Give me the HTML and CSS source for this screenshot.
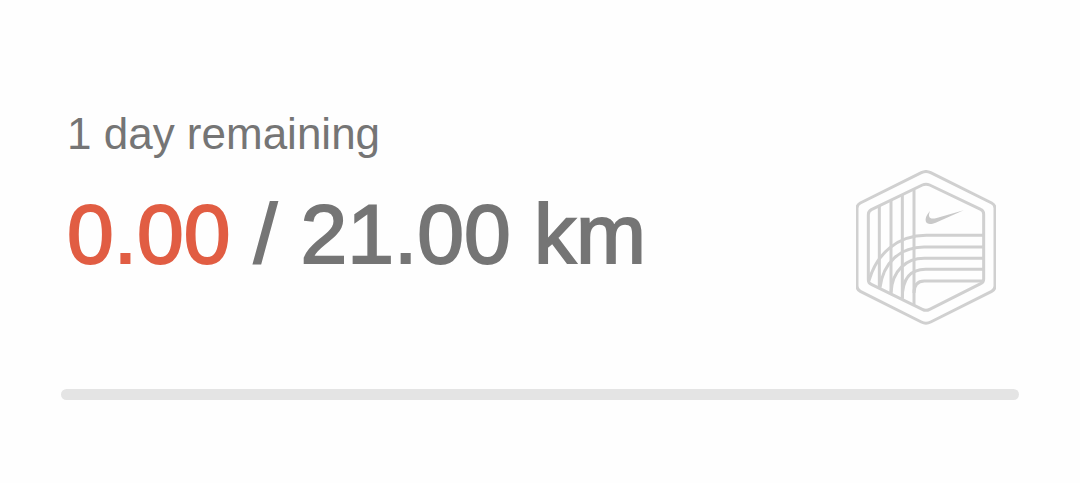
FILE: index.html
```html
<!DOCTYPE html>
<html lang="en">
<head>
<meta charset="utf-8">
<meta name="viewport" content="width=device-width, initial-scale=1">
<title>Running challenge</title>
<link rel="stylesheet" href="styles.css">
</head>
<body>
<main class="challenge">
  <div class="summary">
    <div class="details">
      <p class="remaining">1 day remaining</p>
      <p class="distance" id="distance"><span class="current">0.00</span> / 21.00 km</p>
    </div>
    <svg class="badge" viewBox="30 30 420 465" role="img" aria-label="Challenge badge">
      <g class="badge-lines">
        <path d="M226 38Q240 31 254 38L437 129Q447 134 447 145V378Q447 389 437 394L254 486Q240 493 226 486L43 394Q33 389 33 378V145Q33 134 43 129Z"/>
        <path d="M229 75Q240 70 251 75L404 148Q413 152 413 162V358Q413 367 404 371L251 448Q240 454 229 448L76 373Q67 369 67 360V164Q67 154 76 149Z"/>
        <path d="M100 138V383M135 121V400M169 105V417M204 89V434"/>
        <path d="M413 226H250C155 222 91 283 69 362M413 261H239C162 259 111 309 102 383M413 295H239C180 293 138 333 135 398M413 328H239C195 328 169 352 169 414M413 363H235Q204 363 204 399"/>
      </g>
      <path class="swoosh" d="M252 153C238 168 235 184 244 190C250 194 259 192 269 188L353 151L272 174C250 180 245 170 252 153Z"/>
    </svg>
  </div>
  <progress class="progress" value="0" max="21" aria-labelledby="distance"></progress>
</main>
</body>
</html>
```

FILE: styles.css
```css
body {
  margin: 0;
  background: #fefefe;
  color: #757575;
  font-family: "Liberation Sans", Arial, sans-serif;
}

.challenge {
  padding: 110px 61px 80px;
}

.summary {
  display: flex;
  align-items: flex-end;
  justify-content: space-between;
  padding: 0 23px 64px 6px;
}

.details {
  padding-bottom: 41px;
}

.remaining,
.distance {
  margin: 0;
  white-space: nowrap;
}

.remaining {
  font-size: 44px;
  line-height: 48px;
}

.distance {
  margin-top: 26px;
  font-size: 84px;
  line-height: 100px;
  -webkit-text-stroke: 2px currentColor;
}

.current {
  color: #e15d43;
}

.badge {
  flex: none;
  width: 140px;
  height: 155px;
}

.badge-lines {
  fill: none;
  stroke: #d0d0d0;
  stroke-width: 9;
  stroke-linejoin: round;
}

.swoosh {
  fill: #c9c9c9;
}

.progress {
  display: block;
  appearance: none;
  width: 100%;
  height: 11px;
  border: 0;
  border-radius: 6px;
  overflow: hidden;
  background: #e4e4e4;
}

.progress::-webkit-progress-bar {
  background: #e4e4e4;
}

.progress::-webkit-progress-value {
  background: #e15d43;
}
```
